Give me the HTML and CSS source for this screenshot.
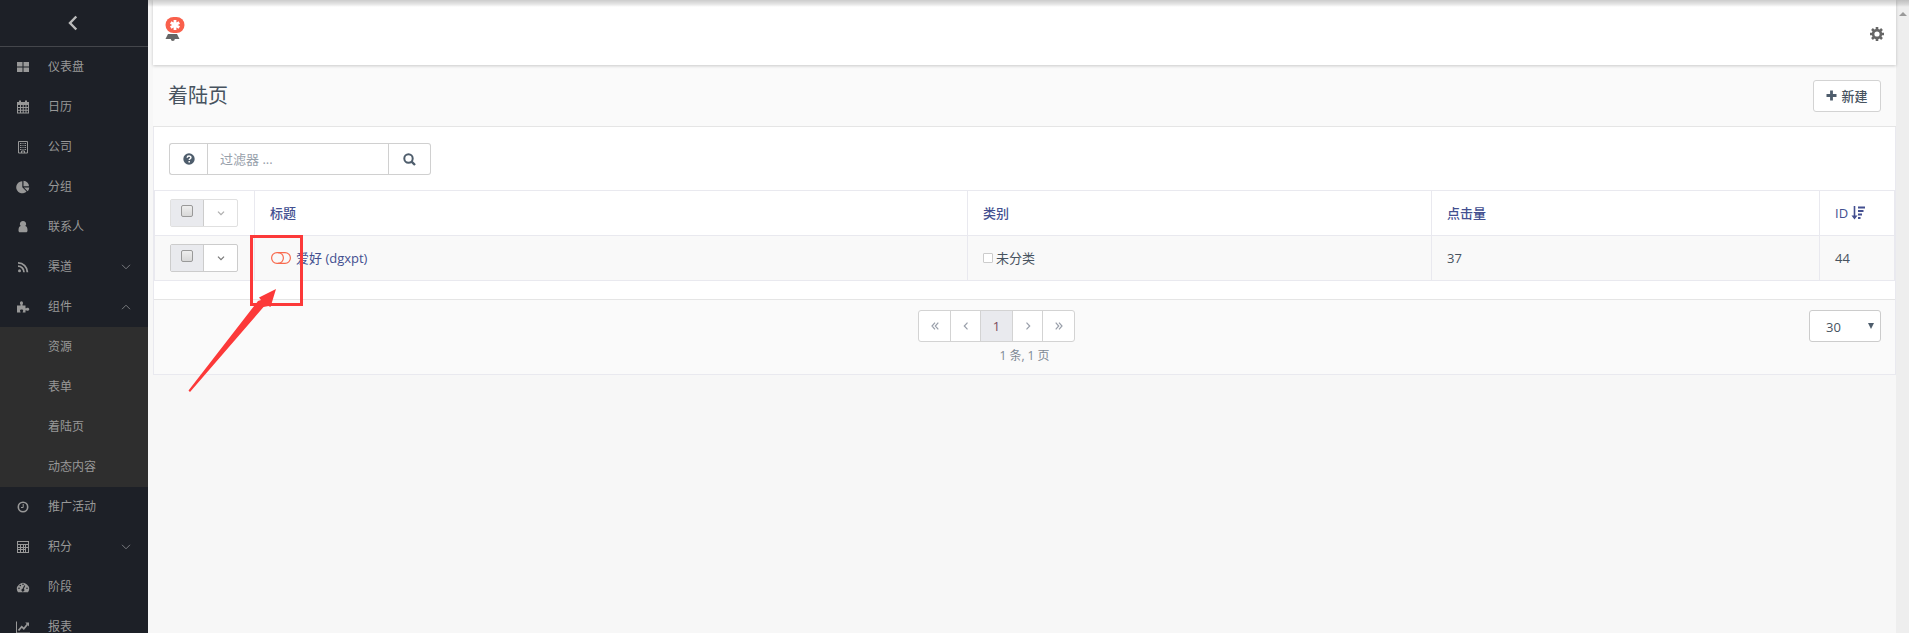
FILE: index.html
```html
<!DOCTYPE html>
<html lang="zh-CN">
<head>
<meta charset="utf-8">
<title>着陆页</title>
<link rel="stylesheet" href="styles.css">
</head>
<body>
<div class="app">
  <nav class="sidebar">
    <button class="collapse" aria-label="收起菜单"><svg width="10" height="16" viewBox="0 0 10 16"><path d="M8.300 1.500L2 8l6.300 6.500" fill="none" stroke="#bbb" stroke-width="2.400"/></svg></button>
    <a class="item" href="#"><svg class="ico" viewBox="0 0 14 14"><path d="M1 2h5.500v4.500H1zM7.500 2H13v4.500H7.500zM1 7.500h5.500V12H1zM7.500 7.500H13V12H7.500z"/></svg><span>仪表盘</span></a>
    <a class="item" href="#"><svg class="ico" viewBox="0 0 14 14"><path d="M1 2h2V.5h2V2h4V.5h2V2h2v11.500H1zM2 5v2h2V5zm3 0v2h1.700V5zm2.700 0v2h1.800V5zm2.800 0v2H12V5zM2 8v1.800h2V8zm3 0v1.800h1.700V8zm2.700 0v1.800h1.800V8zm2.800 0v1.800H12V8zM2 10.800v1.700h2v-1.700zm3 0v1.700h1.700v-1.700zm2.700 0v1.700h1.800v-1.700zm2.800 0v1.700H12v-1.700z" fill-rule="evenodd"/></svg><span>日历</span></a>
    <a class="item" href="#"><svg class="ico" viewBox="0 0 14 14"><path d="M2.500 1.500h9v11.500h-9zM5.500 13v-2h3v2M4 3.500h1.500m1 0h1m1 0H10M4 5.500h1.500m1 0h1m1 0H10M4 7.500h1.500m1 0h1m1 0H10M4 9.500h1.500m1 0h1m1 0H10" fill="none" stroke="currentColor"/></svg><span>公司</span></a>
    <a class="item" href="#"><svg class="ico" viewBox="0 0 14 14"><path d="M6.300 1.300v6l4.200 4.200A6 6 0 1 1 6.300 1.300zM7.500.8A5.500 5.500 0 0 1 13 6.300H7.500zM8 7.500h5.300a6 6 0 0 1-1.700 3.700z"/></svg><span>分组</span></a>
    <a class="item" href="#"><svg class="ico" viewBox="0 0 14 14"><path d="M7 1a3 3 0 0 1 2.300 5.100C11 6.500 11.500 8 11.500 10.500c0 1-.6 1.800-1.500 1.800H4c-.9 0-1.500-.8-1.500-1.800C2.500 8 3 6.500 4.700 6.100A3 3 0 0 1 7 1z"/></svg><span>联系人</span></a>
    <a class="item" href="#"><svg class="ico" viewBox="0 0 14 14"><circle cx="3.500" cy="10.700" r="1.500"/><path d="M2 6.200a6 6 0 0 1 6 6M2 2.800a9.400 9.400 0 0 1 9.400 9.400" fill="none" stroke="currentColor" stroke-width="1.800"/></svg><span>渠道</span><svg class="arrow" viewBox="0 0 10 6"><path d="M1 .8l4 4 4-4"/></svg></a>
    <a class="item" href="#"><svg class="ico" viewBox="0 0 14 14"><path d="M1 5.500h3.500c.6-.6-.6-1-.6-2.200C3.900 2 4.600 1.300 5.500 1.300S7 2 7 3.300c0 1.200-1 1.600-.4 2.200H9.500v2.700c.6.500 1-.4 2-.4s1.800.6 1.800 1.500-.7 1.500-1.800 1.500-1.400-.8-2-.3v2H6.800c-.5-.6.4-1 .4-1.800s-.6-1.300-1.600-1.300-1.600.5-1.600 1.300.9 1.200.4 1.800H1z"/></svg><span>组件</span><svg class="arrow" viewBox="0 0 10 6"><path d="M1 5.200l4-4 4 4"/></svg></a>
    <div class="sub">
      <a class="item" href="#">资源</a>
      <a class="item" href="#">表单</a>
      <a class="item" href="#">着陆页</a>
      <a class="item" href="#">动态内容</a>
    </div>
    <a class="item" href="#"><svg class="ico" viewBox="0 0 14 14"><circle cx="7" cy="7" r="4.700" fill="none" stroke="currentColor" stroke-width="1.600"/><path d="M7.200 4v3.500H5" fill="none" stroke="currentColor"/></svg><span>推广活动</span></a>
    <a class="item" href="#"><svg class="ico" viewBox="0 0 14 14"><path d="M1 1h12v12H1zM2 2v2h10V2zM2 5v2h2V5zm3 0v2h2V5zm3 0v2h1V5zm2 0v2h2V5zM2 8v1h2V8zm3 0v1h2V8zm3 0v1h1V8zM2 10v2h2v-2zm3 0v2h2v-2zm3 0v2h1v-2zm2-2v4h2V8z" fill-rule="evenodd"/></svg><span>积分</span><svg class="arrow" viewBox="0 0 10 6"><path d="M1 .8l4 4 4-4"/></svg></a>
    <a class="item" href="#"><svg class="ico" viewBox="0 0 14 14"><path d="M2 12.300A6 6 0 1 1 12 12.300zM2.200 8.300a.8.800 0 1 0 1.600 0 .8.800 0 1 0-1.600 0M3.500 5.500a.8.800 0 1 0 1.600 0 .8.800 0 1 0-1.600 0M6.200 4.200a.8.800 0 1 0 1.600 0 .8.800 0 1 0-1.600 0M10.200 8.300a.8.800 0 1 0 1.600 0 .8.800 0 1 0-1.600 0M8.300 5.300L6.600 8.800a1.400 1.400 0 1 0 1.200.3l1.400-3.400z" fill-rule="evenodd"/></svg><span>阶段</span></a>
    <a class="item" href="#"><svg class="ico" viewBox="0 0 14 14"><path d="M.5 1.500v11.500H14" fill="none" stroke="currentColor"/><path d="M2.500 10.500l3.200-3.800 2.100 2 3.700-4.500" fill="none" stroke="currentColor" stroke-width="1.800"/><path d="M9.300 2.500H13v4z"/></svg><span>报表</span></a>
  </nav>
  <main class="main">
    <header class="topbar">
      <a class="bell" href="#" aria-label="通知"><svg width="20" height="26" viewBox="0 0 20 26"><path d="M3 17h9l2.500 5H9.800a2 2 0 0 1-4 0H.5z" fill="#666"/><rect x=".5" y="0" width="19" height="16" rx="8" fill="#f9604c"/><path d="M10 3v10M5.700 5.500l8.600 5M14.300 5.500l-8.600 5" stroke="#fff" stroke-width="2.800"/></svg></a>
      <button class="gear" aria-label="设置"><svg width="14" height="14" viewBox="0 0 14 14"><circle cx="7" cy="7" r="3.900" fill="none" stroke="#666" stroke-width="2.600"/><path d="M7 0v2.500M7 11.500V14M0 7h2.500M11.500 7H14M2 2l1.800 1.800M10.200 10.200L12 12M12 2l-1.800 1.800M3.800 10.200L2 12" stroke="#666" stroke-width="2.600"/></svg></button>
    </header>
    <div class="titlebar">
      <h1>着陆页</h1>
      <button class="btn new"><svg width="11" height="11" viewBox="0 0 11 11"><path d="M5.500.5v10M.5 5.500h10" stroke="#4e5d6c" stroke-width="2.800"/></svg>新建</button>
    </div>
    <section class="panel">
      <form class="filter">
        <button type="button" class="help" aria-label="帮助"><svg width="12" height="12" viewBox="0 0 12 12"><circle cx="6" cy="6" r="5.700" fill="#4e5d6c"/><path d="M4.200 4.700C4.200 2.600 7.900 2.600 7.900 4.600 7.900 5.800 6.200 5.700 6.200 7.100M6.200 8.100v1.500" fill="none" stroke="#fff" stroke-width="1.500"/></svg></button>
        <input type="text" aria-label="过滤器" placeholder="过滤器 ...">
        <button type="button" class="search" aria-label="搜索"><svg width="13" height="13" viewBox="0 0 13 13"><circle cx="5.500" cy="5.500" r="4.200" fill="none" stroke="#4e5d6c" stroke-width="2"/><path d="M8.600 8.600l3.400 3.400" stroke="#4e5d6c" stroke-width="2.400"/></svg></button>
      </form>
      <table>
        <colgroup><col class="c-check"><col class="c-title"><col class="c-cat"><col class="c-hits"><col class="c-id"></colgroup>
        <thead><tr>
          <th><div class="pick faded"><label><input type="checkbox" aria-label="全选"></label><button aria-label="批量操作"><svg width="8" height="5" viewBox="0 0 8 5"><path d="M1 .7l3 3 3-3"/></svg></button></div></th>
          <th><a href="#">标题</a></th><th><a href="#">类别</a></th><th><a href="#">点击量</a></th>
          <th><a class="sort" href="#">ID<svg width="14" height="14" viewBox="0 0 14 14"><path d="M3.500 0v11" stroke="#434f90" stroke-width="1.600"/><path d="M.5 9.500h6l-3 4z" fill="#434f90"/><path d="M7 1.500h7M7 5h5.500M7 8.500h4M7 12h2.500" stroke="#434f90" stroke-width="1.800"/></svg></a></th>
        </tr></thead>
        <tbody><tr>
          <td><div class="pick"><label><input type="checkbox" aria-label="选择 爱好"></label><button aria-label="操作"><svg width="8" height="5" viewBox="0 0 8 5"><path d="M1 .7l3 3 3-3"/></svg></button></div></td>
          <td><div class="name"><button class="toggle" aria-label="发布状态"><svg width="20" height="12" viewBox="0 0 20 12"><rect x=".6" y=".6" width="18.800" height="10.800" rx="5.400"/><path d="M7 .6a5.400 5.400 0 0 1 0 10.800M10.500 11.400"/></svg></button><a href="#">爱好 (dgxpt)</a></div></td>
          <td><div class="cat"><span class="swatch"></span>未分类</div></td>
          <td>37</td><td>44</td>
        </tr></tbody>
      </table>
      <footer class="foot">
        <div class="pager-wrap">
          <div class="pager">
            <a href="#" aria-label="首页"><svg width="8" height="8" viewBox="0 0 8 8"><path d="M4 .7L1 4l3 3.300M7.300.7L4.300 4l3 3.300"/></svg></a>
            <a href="#" aria-label="上一页" class="narrow"><svg width="8" height="8" viewBox="0 0 8 8"><path d="M5.500.7L2.300 4l3.200 3.300"/></svg></a>
            <a href="#" class="on">1</a>
            <a href="#" aria-label="下一页" class="narrow"><svg width="8" height="8" viewBox="0 0 8 8"><path d="M2.500.7L5.700 4 2.500 7.300"/></svg></a>
            <a href="#" aria-label="末页"><svg width="8" height="8" viewBox="0 0 8 8"><path d="M.7.7l3 3.300-3 3.300M4 .7L7 4 4 7.300"/></svg></a>
          </div>
          <div class="count">1 条, 1 页</div>
        </div>
        <div class="limit"><select aria-label="每页条数"><option>30</option></select><svg width="6" height="6" viewBox="0 0 6 6"><path d="M0 0h6L3 6z" fill="#4e5d6c"/></svg></div>
      </footer>
    </section>
  </main>
  <div class="scroll"><svg width="8" height="4" viewBox="0 0 8 4"><path d="M4 0l4 4H0z" fill="#999"/></svg></div>
</div>
<div class="shade"></div>
<div class="mark"></div>
<svg class="pointer" width="90" height="104" viewBox="0 0 90 104"><path d="M.5 101.500L70 12l3-1-2-2.500L88 0l-5.500 18-2-1-5 1L2 103z" fill="#fc3939"/></svg>
</body>
</html>
```

FILE: styles.css
```css
* { box-sizing: border-box; }
body {
  margin: 0;
  height: 100vh;
  overflow: hidden;
  position: relative;
  background: #f7f7f7;
  color: #47535f;
  font: 13px/20px "Open Sans", "Noto Sans CJK SC", sans-serif;
}
a { color: #434f90; text-decoration: none; }
button { margin: 0; padding: 0; border: 0; background: none; font: inherit; color: inherit; }
svg { display: block; flex: none; }

.app { display: flex; height: 100vh; }
.sidebar { flex: none; width: 148px; background: #1d2027; overflow: hidden; font-size: 12px; }
.collapse { display: flex; align-items: center; justify-content: center; width: 100%; height: 47px; padding-right: 2px; border-bottom: 1px solid #44464b; }
.item { display: flex; align-items: center; height: 40px; padding: 0 17px 0 16px; color: #989898; }
.ico { width: 14px; height: 14px; margin-right: 18px; fill: currentColor; }
.arrow { width: 10px; height: 6px; margin-left: auto; fill: none; stroke: #77797d; }
.sub { background: #2e2e2e; }
.sub .item { padding-left: 48px; }

.main { flex: 1; min-width: 0; padding-left: 5px; }
.topbar { display: flex; justify-content: space-between; height: 65px; padding: 17px 12px 0; background: #fff; box-shadow: 0 1px 3px rgba(0, 0, 0, .2); position: relative; }
.gear { align-self: flex-start; margin-top: 10px; }
.titlebar { display: flex; align-items: center; justify-content: space-between; height: 62px; padding: 0 15px; background: #fafafa; border-bottom: 1px solid #e5e5e5; }
h1 { margin: 0; font-size: 20px; line-height: 28px; font-weight: 400; }
.btn { display: flex; align-items: center; justify-content: center; gap: 4px; width: 68px; height: 32px; background: #fff; border: 1px solid #d3d3d3; border-radius: 3px; font-weight: 500; }
.panel { background: #fff; border: 1px solid #e9e9ef; border-top: 0; }
.filter { display: flex; height: 63px; padding: 16px 15px 15px; }
.filter button, .filter input { height: 32px; border: 1px solid #d0d0d0; background: #fff; }
.filter button { display: flex; align-items: center; justify-content: center; }
.filter .help { width: 38px; border-right: 0; border-radius: 3px 0 0 3px; }
.filter .search { width: 42px; border-left: 0; border-radius: 0 3px 3px 0; }
.filter input { width: 182px; padding: 0 12px; font: inherit; outline: 0; }
.filter input::placeholder { color: #98a1ab; opacity: 1; }

table { width: 100%; table-layout: fixed; border-collapse: collapse; border: 1px solid #e9e9ef; }
.c-check { width: 100px; }
.c-cat { width: 464px; }
.c-hits { width: 388px; }
.c-id { width: 75px; }
th, td { height: 45px; padding: 0 15px; border: 1px solid #e9e9ef; text-align: left; font-weight: 400; }
th a { font-weight: 500; }
tbody { background: #f9f9f9; }
.pick { display: flex; width: 68px; height: 28px; border: 1px solid #ccc; border-radius: 2px; background: #fff; }
.pick label { display: flex; align-items: flex-start; justify-content: center; width: 33px; padding-top: 5px; background: #e9eaee; border-right: 1px solid #ccc; }
.pick input { appearance: none; width: 12px; height: 12px; margin: 0; border: 1px solid #999; border-radius: 2px; background: linear-gradient(#eee, #d8d8d8); }
.pick button { display: flex; flex: 1; align-items: center; justify-content: center; }
.pick svg { fill: none; stroke: #777; stroke-width: 1.200; }
.faded { border-color: #e0e0e0; }
.faded svg { opacity: .6; }
.sort { display: flex; align-items: center; gap: 3px; }
.name { display: flex; align-items: center; gap: 5px; padding-left: 1px; }
.toggle svg { fill: none; stroke: #f86b4f; stroke-width: 1.200; }
.cat { display: flex; align-items: center; gap: 3px; }
.swatch { width: 10px; height: 10px; border: 1px solid #ccc; border-radius: 1px; background: #fff; }

.foot { display: grid; grid-template-columns: 72px 1fr 72px; align-items: start; height: 75px; margin-top: 18px; padding: 10px 14px 0; border-top: 1px solid #e5e5e5; background: #fafafa; }
.pager-wrap { grid-column: 2; display: flex; flex-direction: column; align-items: center; gap: 4px; }
.pager { display: flex; height: 32px; margin-right: 56px; border: 1px solid #d3d3d3; border-radius: 3px; background: #fff; }
.pager a { display: flex; align-items: center; justify-content: center; width: 32px; color: #7a4a5c; border-left: 1px solid #d3d3d3; }
.pager a:first-child { width: 31px; border-left: 0; }
.pager .narrow { width: 30px; }
.pager .on { background: #e9eaee; }
.pager svg { fill: none; stroke: #999faa; stroke-width: 1.200; }
.count { font-size: 12px; color: #7e8994; }
.limit { display: flex; align-items: center; position: relative; }
.limit select { appearance: none; width: 100%; height: 32px; padding: 2px 16px 0; border: 1px solid #ccc; border-radius: 3px; background: #fff; color: #47535f; font: inherit; }
.limit svg { position: absolute; right: 7px; top: 13px; pointer-events: none; }
.scroll { flex: none; display: flex; justify-content: center; width: 13px; padding-top: 12px; background: #eee; }

.shade { position: absolute; left: 148px; right: 0; top: 0; height: 7px; background: linear-gradient(rgba(0, 0, 0, .2), rgba(0, 0, 0, .1) 60%, transparent); pointer-events: none; }
.mark { position: absolute; left: 250px; top: 235px; width: 53px; height: 71px; border: 3px solid #fc3939; pointer-events: none; }
.pointer { position: absolute; left: 188px; top: 289px; pointer-events: none; }
```
